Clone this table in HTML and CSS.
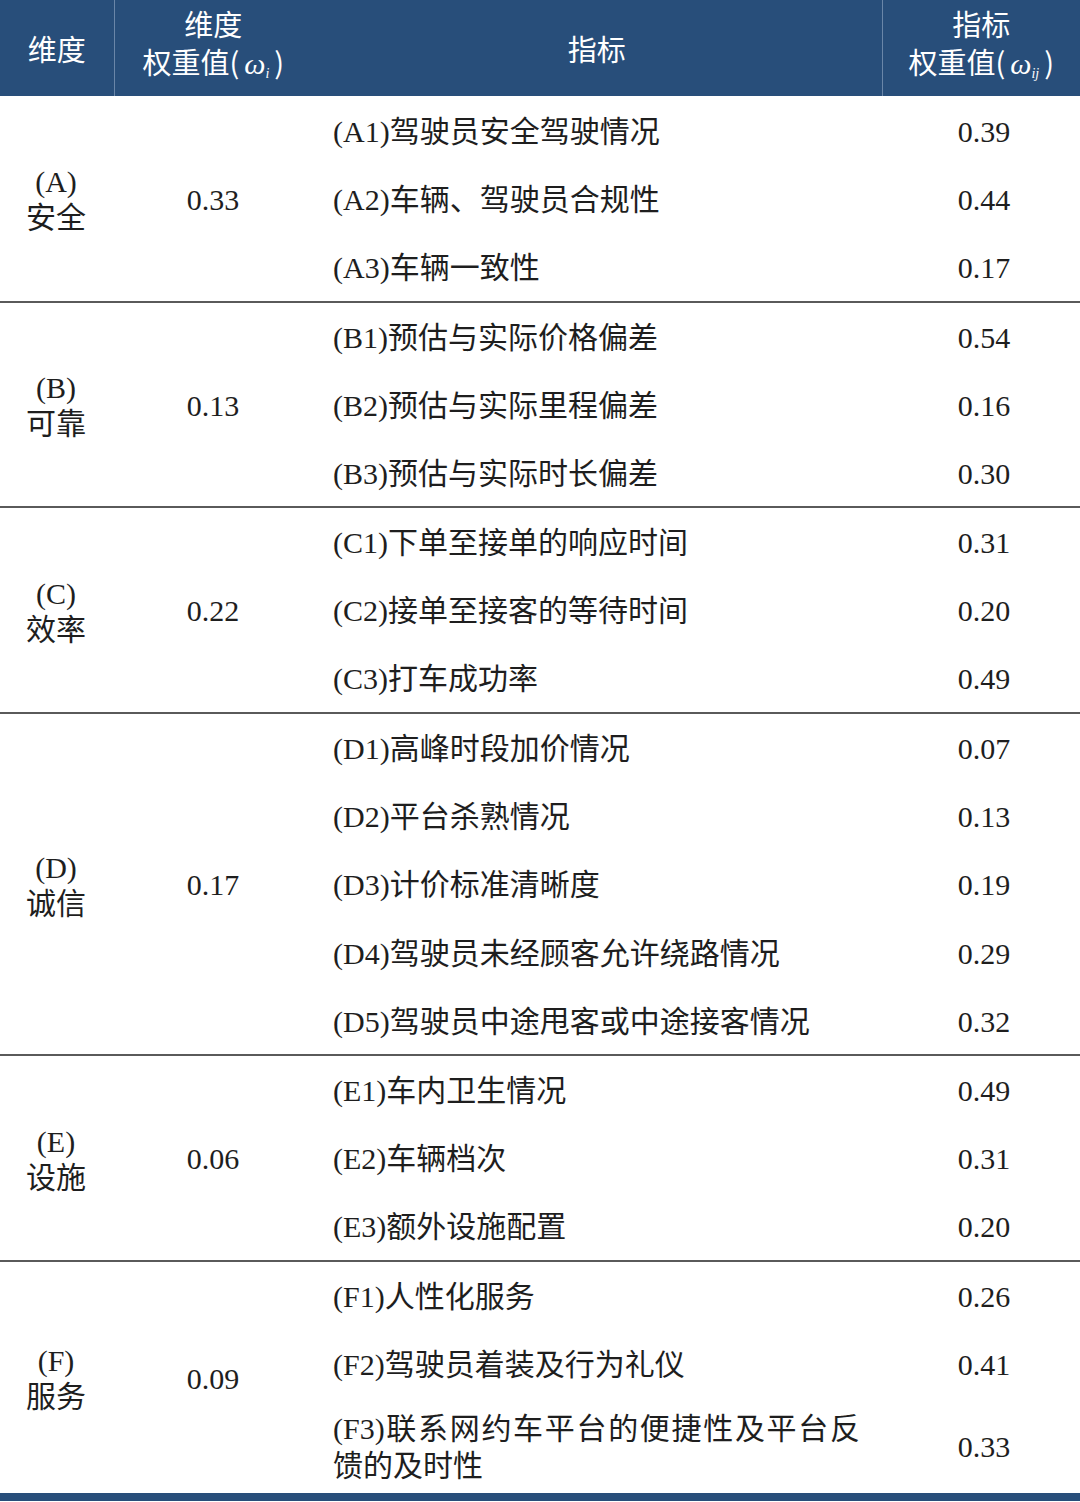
FILE: index.html
```html
<!DOCTYPE html>
<html lang="zh">
<head>
<meta charset="utf-8">
<title>指标权重</title>
<link rel="stylesheet" href="styles.css">
</head>
<body>
<table class="tbl">
  <colgroup>
    <col class="c1"><col class="c2"><col class="c3"><col class="c4">
  </colgroup>
  <thead>
    <tr>
      <th class="hd">维度</th>
      <th class="hd">维度<br>权重值(<span class="om">ω<sub>i</sub></span>)</th>
      <th class="hd nol">指标</th>
      <th class="hd">指标<br>权重值(<span class="om">ω<sub>ij</sub></span>)</th>
    </tr>
  </thead>
  <tbody>
    <tr><td class="dim end" rowspan="3">(A)<br>安全</td><td class="w end" rowspan="3">0.33</td><td class="ind">(A1)驾驶员安全驾驶情况</td><td class="v">0.39</td></tr>
    <tr><td class="ind">(A2)车辆、驾驶员合规性</td><td class="v">0.44</td></tr>
    <tr class="last"><td class="ind end">(A3)车辆一致性</td><td class="v end">0.17</td></tr>

    <tr><td class="dim end" rowspan="3">(B)<br>可靠</td><td class="w end" rowspan="3">0.13</td><td class="ind">(B1)预估与实际价格偏差</td><td class="v">0.54</td></tr>
    <tr><td class="ind">(B2)预估与实际里程偏差</td><td class="v">0.16</td></tr>
    <tr class="last"><td class="ind end">(B3)预估与实际时长偏差</td><td class="v end">0.30</td></tr>

    <tr><td class="dim end" rowspan="3">(C)<br>效率</td><td class="w end" rowspan="3">0.22</td><td class="ind">(C1)下单至接单的响应时间</td><td class="v">0.31</td></tr>
    <tr><td class="ind">(C2)接单至接客的等待时间</td><td class="v">0.20</td></tr>
    <tr class="last"><td class="ind end">(C3)打车成功率</td><td class="v end">0.49</td></tr>

    <tr><td class="dim end" rowspan="5">(D)<br>诚信</td><td class="w end" rowspan="5">0.17</td><td class="ind">(D1)高峰时段加价情况</td><td class="v">0.07</td></tr>
    <tr><td class="ind">(D2)平台杀熟情况</td><td class="v">0.13</td></tr>
    <tr><td class="ind">(D3)计价标准清晰度</td><td class="v">0.19</td></tr>
    <tr><td class="ind">(D4)驾驶员未经顾客允许绕路情况</td><td class="v">0.29</td></tr>
    <tr class="last"><td class="ind end">(D5)驾驶员中途甩客或中途接客情况</td><td class="v end">0.32</td></tr>

    <tr><td class="dim end" rowspan="3">(E)<br>设施</td><td class="w end" rowspan="3">0.06</td><td class="ind">(E1)车内卫生情况</td><td class="v">0.49</td></tr>
    <tr><td class="ind">(E2)车辆档次</td><td class="v">0.31</td></tr>
    <tr class="last"><td class="ind end">(E3)额外设施配置</td><td class="v end">0.20</td></tr>

    <tr><td class="dim final" rowspan="3">(F)<br>服务</td><td class="w final" rowspan="3">0.09</td><td class="ind">(F1)人性化服务</td><td class="v">0.26</td></tr>
    <tr><td class="ind">(F2)驾驶员着装及行为礼仪</td><td class="v">0.41</td></tr>
    <tr class="tall"><td class="ind wrap final">(F3)联系网约车平台的便捷性及平台反馈的及时性</td><td class="v final">0.33</td></tr>
  </tbody>
</table>
</body>
</html>
```

FILE: styles.css
```css
html, body {
  margin: 0;
  padding: 0;
  background: #ffffff;
}

.tbl {
  width: 1080px;
  border-collapse: collapse;
  table-layout: fixed;
  font-family: "Liberation Serif", "Noto Sans CJK SC", serif;
  font-size: 30px;
  color: #1e1e1e;
}

.c1 { width: 114px; }
.c2 { width: 198px; }
.c3 { width: 570px; }
.c4 { width: 198px; }

.hd {
  height: 96px;
  padding: 0;
  background: #284e7a;
  color: #ffffff;
  font-family: "Noto Sans CJK SC", "Liberation Sans", sans-serif;
  font-weight: 400;
  font-size: 29px;
  line-height: 38px;
  text-align: center;
  vertical-align: middle;
  border-left: 1px solid #6a86a8;
}

.hd:first-child,
.hd.nol { border-left: none; }

.om {
  font-family: "Liberation Serif", serif;
  font-style: italic;
  font-size: 30px;
  padding: 0 5px;
}

.om sub {
  font-size: 14px;
  vertical-align: -4px;
}

tbody tr { height: 68.5px; }
tbody tr.tall { height: 99px; }

td {
  padding: 3px 0 0 0;
  vertical-align: middle;
  line-height: 38px;
}

.dim {
  text-align: center;
  line-height: 36px;
  padding: 4px 2px 0 0;
}

.w {
  text-align: center;
}

.v {
  text-align: center;
  padding-left: 6px;
}

.ind {
  padding: 3px 22px 0 21px;
  text-align: left;
}

.wrap {
  text-align: justify;
  text-align-last: left;
  line-height: 37px;
}

.end {
  border-bottom: 2px solid #5a5a5a;
}

.final {
  border-bottom: 8px solid #284e7a;
}
```
